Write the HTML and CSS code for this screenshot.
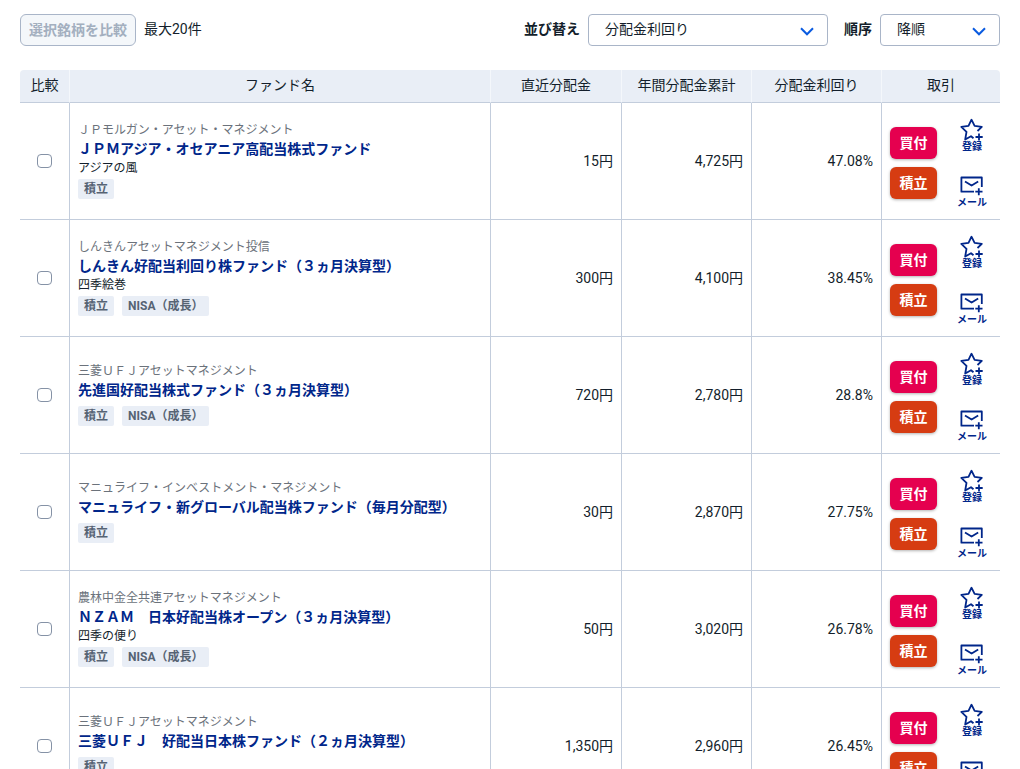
FILE: index.html
```
<!DOCTYPE html>
<html lang="ja">
<head>
    <meta charset="UTF-8">
    <meta name="viewport" content="width=device-width, initial-scale=1.0">
    <title>ファンド一覧</title>
    <link rel="stylesheet" href="styles.css">
</head>
<body>

    <!-- Shared icons -->
    <svg class="icon-defs" width="0" height="0">
        <symbol id="icon-star" viewBox="0 0 24 24">
            <path d="M13.5 20.3 L11 18.2 L5.2 21.5 L6.5 13.9 L1.3 8.9 L8.5 7.9 L11.5 1.7 L14.6 7.9 L21.8 8.9 L17.5 13 M19 15.5 V22.5 M15.5 19 H22.7"/>
        </symbol>
        <symbol id="icon-mail" viewBox="0 0 24 20">
            <path d="M14 15.7 H1.4 V1.5 H21.8 V11 M5 5.5 L11.6 9.5 L18.2 5.5 M18.8 12.2 V19.2 M15.3 15.7 H22.5"/>
        </symbol>
        <symbol id="icon-chevron" viewBox="0 0 14 9">
            <path d="M1 1.3 L7 7.3 L13 1.3"/>
        </symbol>
    </svg>

    <div class="toolbar">
        <button type="button" class="compare-button" disabled>選択銘柄を比較</button>
        <span class="compare-note">最大20件</span>
        <div class="sort">
            <span class="sort-label">並び替え</span>
            <div class="select select-key">分配金利回り<svg class="chevron"><use href="#icon-chevron"/></svg></div>
            <span class="sort-label order-label">順序</span>
            <div class="select select-order">降順<svg class="chevron"><use href="#icon-chevron"/></svg></div>
        </div>
    </div>

    <table>
        <thead>
            <tr>
                <th class="col-check">比較</th>
                <th class="col-name">ファンド名</th>
                <th class="col-recent">直近分配金</th>
                <th class="col-year">年間分配金累計</th>
                <th class="col-yield">分配金利回り</th>
                <th class="col-trade">取引</th>
            </tr>
        </thead>
        <tbody>
            <tr>
                <td class="check"><input type="checkbox"></td>
                <td class="fund">
                    <p class="company">ＪＰモルガン・アセット・マネジメント</p>
                    <a class="name">ＪＰＭアジア・オセアニア高配当株式ファンド</a>
                    <p class="nickname">アジアの風</p>
                    <div class="tags"><span>積立</span></div>
                </td>
                <td class="num">15円</td>
                <td class="num">4,725円</td>
                <td class="num">47.08%</td>
                <td class="trade">
                    <div class="trade-inner">
                        <div class="buttons"><button type="button" class="buy">買付</button><button type="button" class="save">積立</button></div>
                        <div class="links"><a><svg class="star"><use href="#icon-star"/></svg>登録</a><a><svg class="mail"><use href="#icon-mail"/></svg>メール</a></div>
                    </div>
                </td>
            </tr>
            <tr>
                <td class="check"><input type="checkbox"></td>
                <td class="fund">
                    <p class="company">しんきんアセットマネジメント投信</p>
                    <a class="name">しんきん好配当利回り株ファンド（３ヵ月決算型）</a>
                    <p class="nickname">四季絵巻</p>
                    <div class="tags"><span>積立</span><span>NISA（成長）</span></div>
                </td>
                <td class="num">300円</td>
                <td class="num">4,100円</td>
                <td class="num">38.45%</td>
                <td class="trade">
                    <div class="trade-inner">
                        <div class="buttons"><button type="button" class="buy">買付</button><button type="button" class="save">積立</button></div>
                        <div class="links"><a><svg class="star"><use href="#icon-star"/></svg>登録</a><a><svg class="mail"><use href="#icon-mail"/></svg>メール</a></div>
                    </div>
                </td>
            </tr>
            <tr>
                <td class="check"><input type="checkbox"></td>
                <td class="fund">
                    <p class="company">三菱ＵＦＪアセットマネジメント</p>
                    <a class="name">先進国好配当株式ファンド（３ヵ月決算型）</a>
                    <div class="tags"><span>積立</span><span>NISA（成長）</span></div>
                </td>
                <td class="num">720円</td>
                <td class="num">2,780円</td>
                <td class="num">28.8%</td>
                <td class="trade">
                    <div class="trade-inner">
                        <div class="buttons"><button type="button" class="buy">買付</button><button type="button" class="save">積立</button></div>
                        <div class="links"><a><svg class="star"><use href="#icon-star"/></svg>登録</a><a><svg class="mail"><use href="#icon-mail"/></svg>メール</a></div>
                    </div>
                </td>
            </tr>
            <tr>
                <td class="check"><input type="checkbox"></td>
                <td class="fund">
                    <p class="company">マニュライフ・インベストメント・マネジメント</p>
                    <a class="name">マニュライフ・新グローバル配当株ファンド（毎月分配型）</a>
                    <div class="tags"><span>積立</span></div>
                </td>
                <td class="num">30円</td>
                <td class="num">2,870円</td>
                <td class="num">27.75%</td>
                <td class="trade">
                    <div class="trade-inner">
                        <div class="buttons"><button type="button" class="buy">買付</button><button type="button" class="save">積立</button></div>
                        <div class="links"><a><svg class="star"><use href="#icon-star"/></svg>登録</a><a><svg class="mail"><use href="#icon-mail"/></svg>メール</a></div>
                    </div>
                </td>
            </tr>
            <tr>
                <td class="check"><input type="checkbox"></td>
                <td class="fund">
                    <p class="company">農林中金全共連アセットマネジメント</p>
                    <a class="name">ＮＺＡＭ　日本好配当株オープン（３ヵ月決算型）</a>
                    <p class="nickname">四季の便り</p>
                    <div class="tags"><span>積立</span><span>NISA（成長）</span></div>
                </td>
                <td class="num">50円</td>
                <td class="num">3,020円</td>
                <td class="num">26.78%</td>
                <td class="trade">
                    <div class="trade-inner">
                        <div class="buttons"><button type="button" class="buy">買付</button><button type="button" class="save">積立</button></div>
                        <div class="links"><a><svg class="star"><use href="#icon-star"/></svg>登録</a><a><svg class="mail"><use href="#icon-mail"/></svg>メール</a></div>
                    </div>
                </td>
            </tr>
            <tr>
                <td class="check"><input type="checkbox"></td>
                <td class="fund">
                    <p class="company">三菱ＵＦＪアセットマネジメント</p>
                    <a class="name">三菱ＵＦＪ　好配当日本株ファンド（２ヵ月決算型）</a>
                    <div class="tags"><span>積立</span></div>
                </td>
                <td class="num">1,350円</td>
                <td class="num">2,960円</td>
                <td class="num">26.45%</td>
                <td class="trade">
                    <div class="trade-inner">
                        <div class="buttons"><button type="button" class="buy">買付</button><button type="button" class="save">積立</button></div>
                        <div class="links"><a><svg class="star"><use href="#icon-star"/></svg>登録</a><a><svg class="mail"><use href="#icon-mail"/></svg>メール</a></div>
                    </div>
                </td>
            </tr>
        </tbody>
    </table>

</body>
</html>
```
FILE: styles.css
```
* {
    box-sizing: border-box;
}

body {
    height: 769px;
    margin: 0;
    padding: 14px 20px 0;
    overflow: hidden;
    background-color: #fff;
    color: #131e2b;
    font-family: Roboto, "Noto Sans CJK JP", sans-serif;
    font-size: 14px;
    line-height: 21px;
}

button {
    font-family: inherit;
    font-weight: bold;
}

svg {
    display: block;
    fill: none;
}

.icon-defs {
    position: absolute;
}

/* Toolbar */
.toolbar {
    display: flex;
    align-items: center;
    height: 32px;
    margin-bottom: 24px;
}

.compare-button {
    width: 116px;
    height: 32px;
    padding: 0 0 2px;
    border: 1px solid #a9b5c8;
    border-radius: 6px;
    background-color: #f4f7fa;
    color: #a3afbf;
    font-size: 14px;
}

.compare-note {
    margin-left: 8px;
    padding-bottom: 2px;
}

.sort {
    display: flex;
    align-items: center;
    margin-left: auto;
}

.sort-label {
    margin-right: 8px;
    padding-bottom: 2px;
    font-weight: bold;
}

.order-label {
    margin-left: 16px;
}

.select {
    display: flex;
    align-items: center;
    justify-content: space-between;
    height: 32px;
    padding: 0 13px 2px 16px;
    border: 1px solid #a9b5c8;
    border-radius: 4px;
}

.select-key {
    width: 240px;
}

.select-order {
    width: 120px;
}

.chevron {
    width: 14px;
    height: 9px;
    margin-top: 5px;
    stroke: #0a5be0;
    stroke-width: 2;
}

/* Fund table */
table {
    width: 980px;
    table-layout: fixed;
    border-collapse: separate;
    border-spacing: 0;
}

th, td {
    padding: 0 8px;
    border-bottom: 1px solid #c3cddc;
}

th {
    height: 33px;
    padding-bottom: 1px;
    border-right: 1px solid #f4f7fb;
    background-color: #e9eef6;
    font-weight: normal;
}

th:first-child {
    border-top-left-radius: 4px;
}

th:last-child {
    border-right: none;
    border-top-right-radius: 4px;
}

td {
    height: 117px;
    border-right: 1px solid #c3cddc;
}

td:last-child {
    border-right: none;
}

.col-check {
    width: 50px;
}

.col-name {
    width: 421px;
}

.col-recent {
    width: 131px;
}

.col-year, .col-yield {
    width: 130px;
}

.check {
    padding: 0;
    text-align: center;
}

.check input {
    display: block;
    appearance: none;
    width: 15px;
    height: 14px;
    margin: 0 auto;
    border: 1px solid #8592a6;
    border-radius: 4px;
    background-color: #fff;
}

.fund {
    padding-top: 1px;
}

.company, .nickname {
    margin: 0;
    font-size: 12px;
}

.company {
    color: #6b727b;
    line-height: 18px;
}

.name {
    display: block;
    color: #00268a;
    font-weight: bold;
    white-space: nowrap;
}

.nickname {
    margin-bottom: -2px;
    line-height: 16px;
}

.tags {
    display: flex;
    gap: 8px;
    padding: 5px 0 3px;
}

.tags span {
    height: 20px;
    padding: 0 6px;
    border-radius: 2px;
    background-color: #e9eef6;
    color: #566373;
    font-size: 12px;
    font-weight: bold;
    line-height: 20px;
}

.num {
    text-align: right;
}

/* Trade column */
.trade-inner {
    display: flex;
    gap: 20px;
    padding-top: 2px;
}

.buttons {
    display: flex;
    flex-direction: column;
    gap: 8px;
    padding-top: 9px;
}

.buttons button {
    width: 47px;
    height: 32px;
    padding: 0 0 2px;
    border: none;
    border-radius: 6px;
    box-shadow: 0 1px 3px rgba(0, 0, 0, 0.3);
    color: #fff;
    font-size: 14px;
}

.buy {
    background-color: #e5004f;
}

.save {
    background-color: #d63c12;
}

.links {
    display: flex;
    flex-direction: column;
    gap: 24px;
    margin-bottom: -2px;
}

.links a {
    display: flex;
    flex-direction: column;
    align-items: center;
    width: 30px;
    color: #00268a;
    font-size: 10px;
    font-weight: bold;
    line-height: 10px;
}

.links svg {
    stroke: #00268a;
    stroke-width: 1.8;
    stroke-linejoin: round;
}

.star {
    width: 24px;
    height: 24px;
}

.mail {
    width: 24px;
    height: 20px;
    margin-bottom: 2px;
}
```
